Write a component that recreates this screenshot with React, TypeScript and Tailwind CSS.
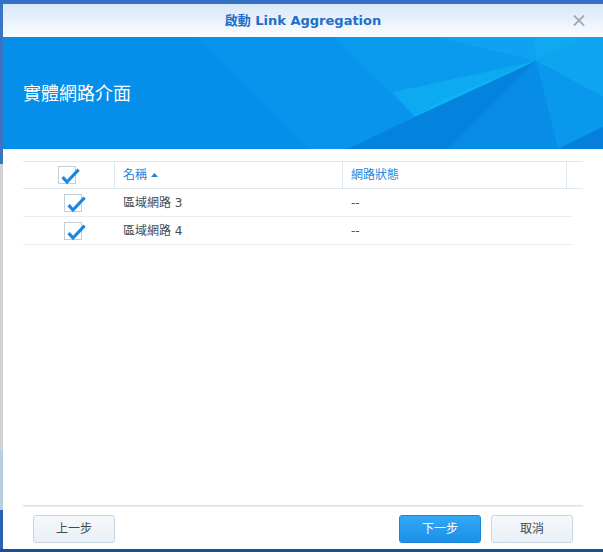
import React from "react";

const FONT = { fontFamily: '"DejaVu Sans", "Noto Sans CJK TC", sans-serif' };

function Check({ className }: { className?: string }) {
  return (
    <div className={"relative w-[18px] h-[18px] border border-[#c3ced9] bg-white " + (className ?? "")}>
      <svg className="absolute left-0 top-0 overflow-visible" width="22" height="20" viewBox="0 0 22 20">
        <path d="M3.6 10.2 L8 15 L19.6 2.6" fill="none" stroke="#1a88e3" strokeWidth="3.2" strokeLinecap="butt" strokeLinejoin="miter" />
      </svg>
    </div>
  );
}

function Banner() {
  return (
    <div className="relative h-[112px] bg-[#058fea] overflow-hidden">
      <svg className="absolute inset-0" width="600" height="112" viewBox="0 0 600 112" preserveAspectRatio="none">
        <polygon points="195,0 432,0 533,24 412,80 345,112 305,112" fill="#0894ec" />
        <polygon points="330,0 432,0 533,24 412,80" fill="#0a9aee" />
        <polygon points="432,0 530,0 533,24" fill="#0fa2f0" />
        <polygon points="390,55 533,24 412,80" fill="#0caaf0" />
        <polygon points="440,62 533,24 412,80" fill="#0db2f2" />
        <polygon points="530,0 585,0 533,24" fill="#10a8f0" />
        <polygon points="585,0 600,0 600,60 533,24" fill="#0ea4ef" />
        <polygon points="533,24 600,60 600,90 555,112" fill="#0a98ec" />
        <polygon points="412,80 533,24 445,112 345,112" fill="#0483de" />
        <polygon points="533,24 555,112 445,112" fill="#078de6" />
        <polygon points="555,112 600,90 600,112" fill="#047fdb" />
      </svg>
      <div className="relative h-full flex items-center pl-[20px] pt-[2px]">
        <span className="text-white text-[18px] leading-none" style={FONT}>實體網路介面</span>
      </div>
    </div>
  );
}

function Btn({ children, primary }: { children: React.ReactNode; primary?: boolean }) {
  return (
    <button
      className={
        "w-[82px] h-[28px] rounded-[3px] border text-[12px] flex items-center justify-center " +
        (primary
          ? "border-[#1a86dc] bg-gradient-to-b from-[#33a8f5] to-[#1990e8] text-white"
          : "border-[#c9d5e0] bg-gradient-to-b from-[#f6f8fb] to-[#eaf0f6] text-[#3f4a55]")
      }
      style={FONT}
    >
      {children}
    </button>
  );
}

export default function App() {
  return (
    <div className="w-[603px] h-[552px] flex flex-col overflow-hidden bg-[#2f6bc0]" style={FONT}>
      <div className="h-[4px] bg-[#3471c5] shrink-0" />
      <div className="flex flex-1 min-h-0">
        <div className="w-[3px] flex flex-col shrink-0">
          <div className="h-[160px] bg-[#3a74c4]" />
          <div className="h-[286px] bg-[#d2d2d2]" />
          <div className="h-[60px] bg-[#b7cfe3]" />
          <div className="flex-1 bg-[#2a63b6]" />
        </div>
        <div className="flex-1 flex flex-col bg-white min-w-0">
          <div className="h-[33px] shrink-0 relative flex items-center justify-center bg-gradient-to-b from-[#d8e7f7] to-[#fbfdff]">
            <span className="text-[#1e6fc9] text-[13px] font-bold tracking-[0px]">啟動 Link Aggregation</span>
            <svg className="absolute right-[18px] top-[11px]" width="12" height="11" viewBox="0 0 12 11">
              <path d="M1 0.5 L11 10.5 M11 0.5 L1 10.5" stroke="#a3a8ad" strokeWidth="1.8" />
            </svg>
          </div>
          <Banner />
          <div className="flex-1 flex flex-col px-[20px] pt-[12px]">
            <div className="flex-1">
              <div className="flex h-[28px] border-t border-b border-[#dfe7ef] text-[12px] text-[#1a85e0]">
                <div className="w-[92px] border-r border-[#dfe7ef] flex items-center justify-center pr-[3px]">
                  <Check />
                </div>
                <div className="w-[228px] border-r border-[#dfe7ef] flex items-center pl-[8px] gap-[4px]">
                  <span>名稱</span>
                  <svg width="7" height="4" viewBox="0 0 7 4"><path d="M0 4 L3.5 0 L7 4 Z" fill="#1a85e0" /></svg>
                </div>
                <div className="w-[224px] border-r border-[#dfe7ef] flex items-center pl-[8px]">網路狀態</div>
                <div className="flex-1" />
              </div>
              {["3", "4"].map((n) => (
                <div key={n} className="flex h-[28px] w-[549px] border-b border-[#e6ecf2] text-[12px] text-[#3f4a55]">
                  <div className="w-[92px] flex items-center pl-[41px]">
                    <Check />
                  </div>
                  <div className="w-[228px] flex items-center pl-[8px]">區域網路 {n}</div>
                  <div className="flex-1 flex items-center pl-[8px] text-[#555]">--</div>
                </div>
              ))}
            </div>
            <div className="h-[2px] bg-[#e2e2e2] border-b border-[#efefef]" />
            <div className="flex items-center justify-between px-[10px] pt-[8px] pb-[6px]">
              <Btn>上一步</Btn>
              <div className="flex gap-[10px]">
                <Btn primary>下一步</Btn>
                <Btn>取消</Btn>
              </div>
            </div>
          </div>
        </div>
      </div>
      <div className="h-[3px] bg-[#1f4f8d] shrink-0" />
    </div>
  );
}
